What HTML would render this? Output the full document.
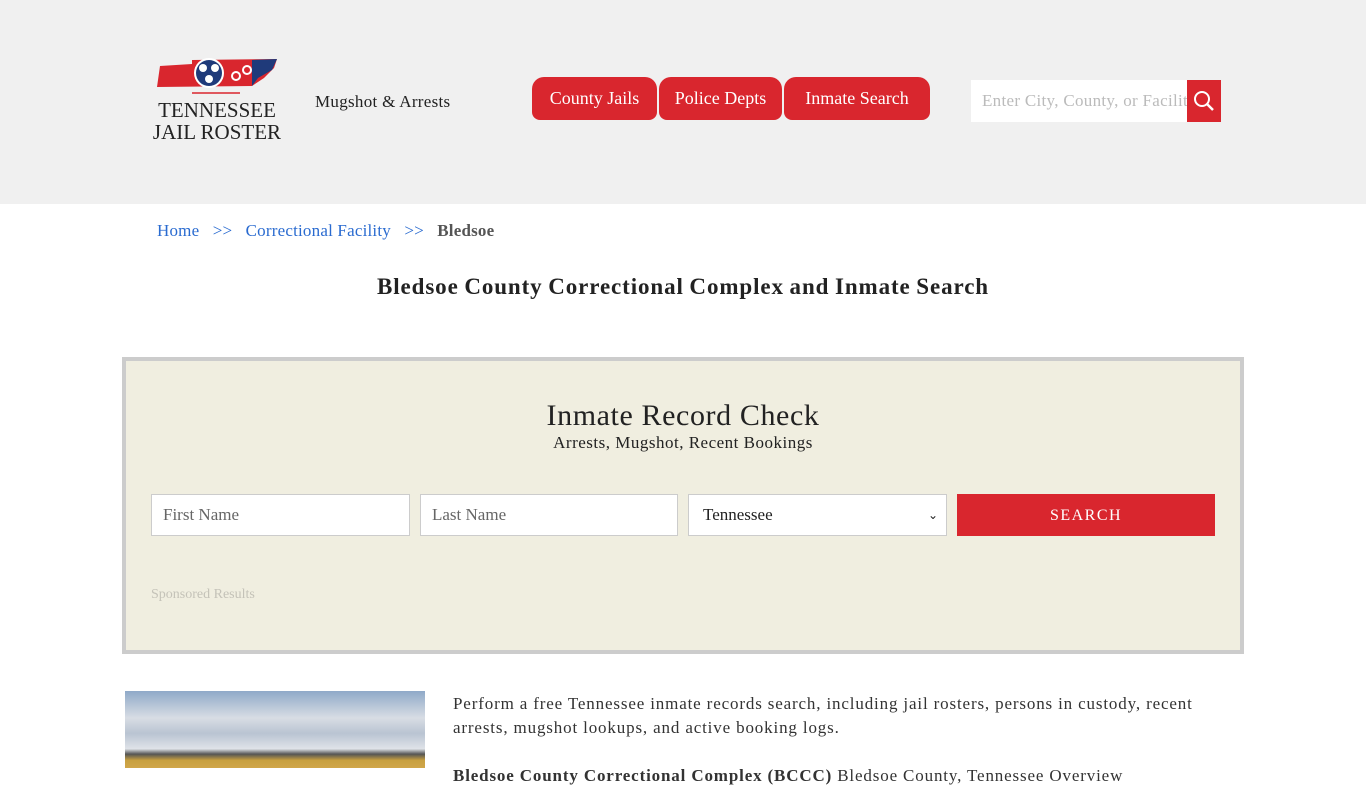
<!DOCTYPE html>
<html><head><meta charset="utf-8"><style>
*{box-sizing:border-box;margin:0;padding:0}
body{width:1366px;height:768px;overflow:hidden;background:#fff;font-family:"Liberation Serif",serif;color:#222}
.hdr{position:absolute;left:0;top:0;width:1366px;height:204px;background:#f0f0f0}
.logo{position:absolute;left:152px;top:56px;width:130px;height:44px}
.lt{position:absolute;left:146px;top:99px;width:142px;text-align:center;font-size:21px;line-height:22px;color:#222;white-space:nowrap}
.mug{position:absolute;left:315px;top:92px;font-size:17px;letter-spacing:0.3px}
.nav{position:absolute;top:77px;height:43px;background:#d9262e;color:#fff;font-size:18px;line-height:43px;text-align:center;border-radius:12px 12px 8px 8px}
.sb{position:absolute;left:971px;top:80px;width:216px;height:42px;background:#fff;color:#bbb;font-size:17px;line-height:42px;padding-left:11px;white-space:nowrap;overflow:hidden;letter-spacing:0.3px}
.sbtn{position:absolute;left:1187px;top:80px;width:34px;height:42px;background:#d9262e}
.bc{position:absolute;left:157px;top:221px;font-size:17px;color:#2a6bd0;letter-spacing:0.2px}
.bc b{color:#555}
h1{position:absolute;left:0;width:1366px;top:274px;text-align:center;font-size:23px;font-weight:bold;color:#222;letter-spacing:0.9px;word-spacing:-1px}
.box{position:absolute;left:122px;top:357px;width:1122px;height:297px;background:#f0eee0;border:4px solid #ccc}
.t1{position:absolute;width:100%;top:38px;text-align:center;font-size:30px;letter-spacing:0.6px}
.t2{position:absolute;width:100%;top:72px;text-align:center;font-size:17px;letter-spacing:0.5px}
.in{position:absolute;top:133px;height:42px;background:#fff;border:1px solid #ccc;font-size:17px;color:#666;line-height:40px;padding-left:11px}
.go{position:absolute;left:831px;top:133px;width:258px;height:42px;background:#d9262e;color:#fff;font-size:16px;letter-spacing:1.5px;text-align:center;line-height:44px}
.sp{position:absolute;left:25px;top:226px;font-size:14px;color:#c4c2b8}
.img{position:absolute;left:125px;top:691px;width:300px;height:77px;background:linear-gradient(#8fa9c8 0%,#d8dde4 35%,#b9c4d2 55%,#dfe3e8 75%,#555 82%,#c8a040 90%,#d0a64a 100%)}
.p{position:absolute;left:453px;top:692px;width:760px;font-size:17px;line-height:24px;color:#333;letter-spacing:0.85px}
</style></head><body>
<div class="hdr">
<svg class="logo" viewBox="0 0 130 44"><path d="M8 10 L40 8 L40 4 L125 3 L122 12 L112 22 L100 30 L5 31 Z" fill="#d9262e"/><path d="M100 4 L125 3 L120 14 L106 22 L100 30 Z" fill="#1f3a7a"/><circle cx="57" cy="17" r="15" fill="#fff"/><circle cx="57" cy="17" r="13" fill="#1f3a7a"/><g fill="#fff"><circle cx="51" cy="12" r="4"/><circle cx="63" cy="12" r="4"/><circle cx="57" cy="23" r="4"/></g><circle cx="84" cy="20" r="4" fill="none" stroke="#fff" stroke-width="2"/><circle cx="95" cy="14" r="4" fill="none" stroke="#fff" stroke-width="2"/><path d="M40 37 H88" stroke="#d9262e" stroke-width="1.5"/></svg>
<div class="lt">TENNESSEE<br>JAIL ROSTER</div>
<div class="mug">Mugshot &amp; Arrests</div>
<div class="nav" style="left:532px;width:125px">County Jails</div>
<div class="nav" style="left:659px;width:123px">Police Depts</div>
<div class="nav" style="left:784px;width:146px">Inmate Search</div>
<div class="sb">Enter City, County, or Facility</div>
<div class="sbtn"><svg width="34" height="42"><circle cx="15" cy="19" r="7" fill="none" stroke="#fff" stroke-width="2"/><path d="M20 24 L26 30" stroke="#fff" stroke-width="2.5"/></svg></div>
</div>
<div class="bc">Home &nbsp;&nbsp;&gt;&gt;&nbsp;&nbsp; Correctional Facility &nbsp;&nbsp;&gt;&gt;&nbsp;&nbsp; <b>Bledsoe</b></div>
<h1>Bledsoe County Correctional Complex and Inmate Search</h1>
<div class="box">
<div class="t1">Inmate Record Check</div>
<div class="t2">Arrests, Mugshot, Recent Bookings</div>
<div class="in" style="left:25px;width:259px">First Name</div>
<div class="in" style="left:294px;width:258px">Last Name</div>
<div class="in" style="left:562px;width:259px;color:#222;padding-left:14px">Tennessee<span style="position:absolute;right:8px;font-size:12px">&#8964;</span></div>
<div class="go">SEARCH</div>
<div class="sp">Sponsored Results</div>
</div>
<div class="img"></div>
<div class="p">Perform a free Tennessee inmate records search, including jail rosters, persons in custody, recent arrests, mugshot lookups, and active booking logs.<br><br><b>Bledsoe County Correctional Complex (BCCC)</b> Bledsoe County, Tennessee Overview</div>
</body></html>
